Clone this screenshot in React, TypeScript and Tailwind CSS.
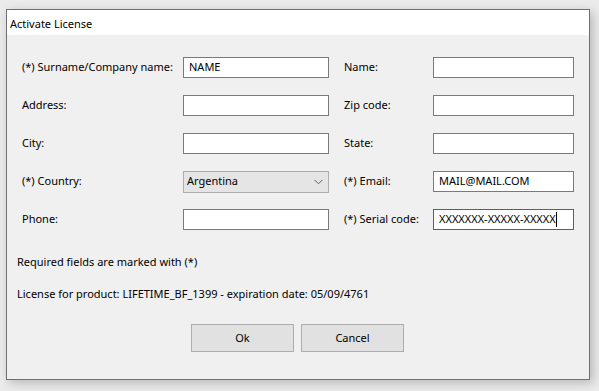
import React from "react";

const font = { fontFamily: '"Noto Sans", "Open Sans", sans-serif' };

function Field({ value, focused }: { value?: string; focused?: boolean }) {
  return (
    <div
      className={`h-[21px] bg-white border flex items-center pl-[5px] overflow-hidden whitespace-nowrap ${
        focused ? "border-[#0078d7]" : "border-[#7a7a7a]"
      }`}
    >
      {value}
      {focused && <span className="inline-block w-px h-[15px] bg-black shrink-0" />}
    </div>
  );
}

function Combo({ value }: { value: string }) {
  return (
    <div className="h-[22px] bg-[#e5e5e5] border border-[#adadad] flex items-center justify-between pl-[3px] pr-[5px]">
      <span>{value}</span>
      <svg width="9" height="6" viewBox="0 0 9 6" fill="none">
        <path d="M0.5 0.8 L4.5 4.8 L8.5 0.8" stroke="#606060" strokeWidth="1" />
      </svg>
    </div>
  );
}

const rows: {
  left: string;
  leftEl: React.ReactNode;
  right: string;
  rightEl: React.ReactNode;
}[] = [
  { left: "(*) Surname/Company name:", leftEl: <Field value="NAME" />, right: "Name:", rightEl: <Field /> },
  { left: "Address:", leftEl: <Field />, right: "Zip code:", rightEl: <Field /> },
  { left: "City:", leftEl: <Field />, right: "State:", rightEl: <Field /> },
  { left: "(*) Country:", leftEl: <Combo value="Argentina" />, right: "(*) Email:", rightEl: <Field value="MAIL@MAIL.COM" /> },
  { left: "Phone:", leftEl: <Field />, right: "(*) Serial code:", rightEl: <Field value="XXXXXXX-XXXXX-XXXXX" focused /> },
];

export default function App() {
  return (
    <div className="w-[599px] h-[391px] bg-[#ebebeb] pt-[9px] pl-[6px] text-[11px] text-black overflow-hidden whitespace-nowrap" style={font}>
      <div className="w-[584px] h-[371px] border border-[#6f6f6f] bg-[#f0f0f0] flex flex-col shadow-[3px_3px_10px_rgba(0,0,0,0.22)]">
        <div className="h-[25px] bg-white flex items-center pl-[3px] pt-[3px]">Activate License</div>

        <div className="flex flex-col gap-[17px] pt-[22px] pl-[15px]">
          {rows.map((r) => (
            <div key={r.left} className="flex items-center h-[21px]">
              <div className="w-[161px]">{r.left}</div>
              <div className="w-[146px]">{r.leftEl}</div>
              <div className="w-[15px]" />
              <div className="w-[89px]">{r.right}</div>
              <div className="w-[141px]">{r.rightEl}</div>
            </div>
          ))}
        </div>

        <div className="pl-[10px] mt-[24px] leading-[16px]">Required fields are marked with (*)</div>
        <div className="pl-[10px] mt-[16px] leading-[16px]">
          License for product: LIFETIME_BF_1399 - expiration date: 05/09/4761
        </div>

        <div className="flex gap-[7px] pl-[184px] mt-[22px]">
          <button className="w-[103px] h-[28px] bg-[#e1e1e1] border border-[#adadad]">Ok</button>
          <button className="w-[103px] h-[28px] bg-[#e1e1e1] border border-[#adadad]">Cancel</button>
        </div>
      </div>
    </div>
  );
}
